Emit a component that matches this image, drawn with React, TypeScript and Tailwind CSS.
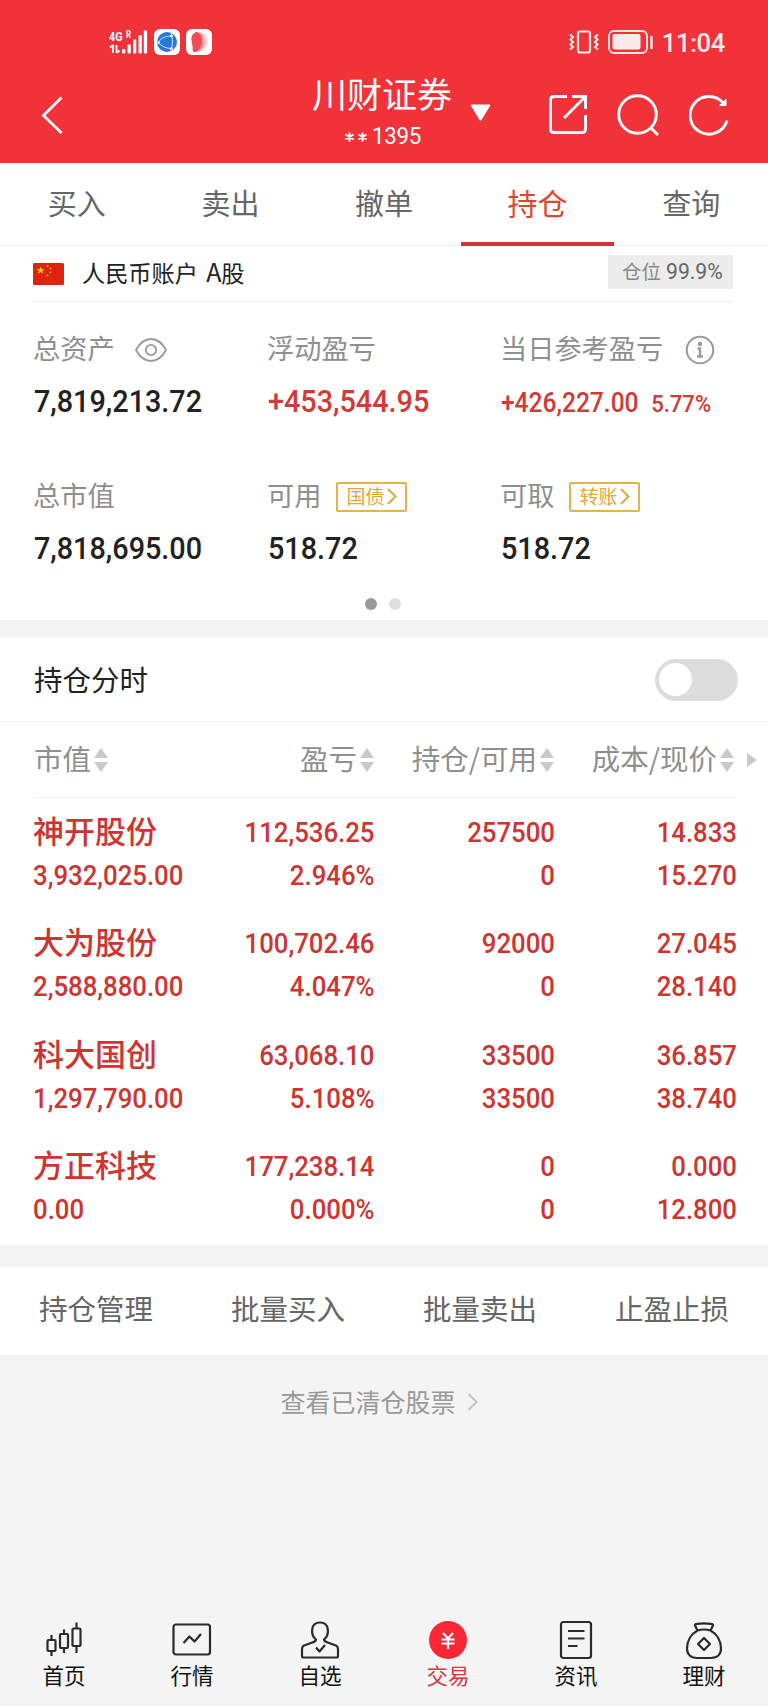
import type { ReactNode } from "react"

const tabs = ["买入", "卖出", "撤单", "持仓", "查询"]

const holdings = [
  { name: "神开股份", value: "3,932,025.00", profit: "112,536.25", rate: "2.946%", qty: "257500", usable: "0", cost: "14.833", price: "15.270" },
  { name: "大为股份", value: "2,588,880.00", profit: "100,702.46", rate: "4.047%", qty: "92000", usable: "0", cost: "27.045", price: "28.140" },
  { name: "科大国创", value: "1,297,790.00", profit: "63,068.10", rate: "5.108%", qty: "33500", usable: "33500", cost: "36.857", price: "38.740" },
  { name: "方正科技", value: "0.00", profit: "177,238.14", rate: "0.000%", qty: "0", usable: "0", cost: "0.000", price: "12.800" },
]

const actions = ["持仓管理", "批量买入", "批量卖出", "止盈止损"]

function StatusBar() {
  return (
    <div className="flex h-[84px] items-center pl-[109px] pr-[43px]">
      <svg width="40" height="26" viewBox="0 0 40 26" fill="#fff" className="mt-[-1px]">
        <text x="0" y="11.500" fontFamily="Roboto" fontWeight="700" fontSize="13" textLength="13.500" lengthAdjust="spacingAndGlyphs">4G</text>
        <text x="17" y="9" fontFamily="Roboto" fontWeight="700" fontSize="10" textLength="5" lengthAdjust="spacingAndGlyphs">R</text>
        <path d="M4 16v8M1 18.500 4 16M7.500 16v8M10.500 21.500 7.500 24" stroke="#fff" strokeWidth="1.800" fill="none" />
        <rect x="13" y="20" width="3.300" height="4.500" rx="1" />
        <rect x="18.500" y="15.500" width="3.300" height="9" rx="1" />
        <rect x="24" y="10.500" width="3.300" height="14" rx="1" />
        <rect x="29.500" y="6" width="3.300" height="18.500" rx="1" />
        <rect x="34.800" y="1.500" width="3.300" height="23" rx="1" />
      </svg>
      <svg width="26" height="26" viewBox="0 0 26 26" className="ml-[5px]">
        <rect width="26" height="26" rx="6" fill="#fff" />
        <circle cx="13" cy="13" r="10" fill="#2878dc" />
        <path d="M4 13.500C8 8 13 6.500 19 7.500M4 13.500c4 4 8 6 14 6M17 4c2 6 2 12-.5 18" stroke="#cfe4fb" strokeWidth="1" fill="none" />
        <circle cx="4.500" cy="13.500" r="1.300" fill="#fff" />
        <circle cx="17.500" cy="7" r="1.300" fill="#fff" />
        <circle cx="17.500" cy="19.500" r="1.300" fill="#fff" />
      </svg>
      <svg width="26" height="26" viewBox="0 0 26 26" className="ml-[6px]">
        <rect width="26" height="26" rx="6" fill="#fff" />
        <path d="M13 4c5-1 8 2 8.500 8s-3 10-10 11z" fill="#fbd3d3" />
        <path d="M11 3.500c5-1 7 3 7.500 8.500s-3 10-9 11z" fill="#f59a9c" />
        <path d="M6 6.500 9.500 3c4.500 0 6.500 4 6.500 9.500S13 22 8 23.500L6.500 21C7.500 16 4 11 6 6.500z" fill="#ef4d53" />
      </svg>
      <div className="ml-auto flex items-center text-[#fdeaea]">
        <svg width="30" height="24" viewBox="0 0 30 24" fill="none" stroke="currentColor" strokeWidth="2.200">
          <rect x="9" y="1.500" width="12" height="21" rx="2" />
          <path d="M1 4.500 4 7 1.500 9.500 4 12l-2.500 2.500L4 17l-3 2.500M29 4.500 26 7l2.500 2.500L26 12l2.500 2.500L26 17l3 2.500" strokeWidth="2" />
        </svg>
        <svg width="46" height="24" viewBox="0 0 46 24" fill="none" stroke="currentColor" className="ml-[9px]">
          <rect x="1" y="1" width="38" height="22" rx="5" strokeWidth="1.800" />
          <rect x="4.500" y="4" width="28" height="15.500" rx="2" fill="currentColor" stroke="none" />
          <path d="M43.500 7v11" strokeWidth="2.500" strokeLinecap="round" />
        </svg>
        <span className="ml-[8px] mt-[2px] font-[Roboto] text-[25.500px] font-medium leading-[26px] tracking-[-0.300px]">11:04</span>
      </div>
    </div>
  )
}

function Header() {
  return (
    <header className="h-[163px] bg-[#f13239] text-white">
      <StatusBar />
      <div className="mt-[-5px] grid h-[64px] grid-cols-[252px_264px_252px]">
        <div className="flex items-center pl-[41px]">
          <svg width="22" height="38" viewBox="0 0 22 38" fill="none" stroke="#fff" strokeWidth="2.800">
            <path d="M20.500 1.500 2.500 19.500l18 17.500" />
          </svg>
        </div>
        <div className="flex items-center">
          <div className="ml-[60px] mt-[-7px] w-[140px] text-center">
            <div className="text-[35px] leading-[42px]">川财证券</div>
            <div className="mt-[8px] flex h-[28px] items-center justify-center">
              <svg width="24" height="10" viewBox="0 0 24 10" stroke="#fff" strokeWidth="2" className="mt-[1px]">
                <path d="M4.500.500v9M.500 2.500l8 5M.500 7.500l8-5M17.500.500v9M13.500 2.500l8 5M13.500 7.500l8-5" />
              </svg>
              <span className="ml-[3px] w-[48px] origin-left scale-x-[0.93] font-[Roboto] text-[24px] leading-[28px] tracking-[-0.300px]">1395</span>
            </div>
          </div>
          <svg width="21" height="17" viewBox="0 0 21 17" fill="#fff" className="ml-[18px] mt-[-4px]">
            <path d="M1.500.500h18q1.500 0 .500 1.500l-8.500 14q-1 1-2 0L1 2Q0 .500 1.500.500z" />
          </svg>
        </div>
        <div className="flex items-center gap-[30px] pl-[33px]">
          <svg width="38" height="39" viewBox="0 0 38 39" fill="none" stroke="#fff" strokeWidth="2.900">
            <path d="M18 1.500H5Q1.500 1.500 1.500 5v29q0 3.500 3.500 3.500h28q3.500 0 3.500-3.500V20M23 1.500h13.500V14M36.500 1.500 15 23" />
          </svg>
          <svg width="42" height="42" viewBox="0 0 42 42" fill="none" stroke="#fff" strokeWidth="2.900">
            <circle cx="20.500" cy="20.500" r="18.800" />
            <path d="m33 33 8 8" />
          </svg>
          <svg width="40" height="42" viewBox="0 0 40 42" fill="none" stroke="#fff" strokeWidth="2.900">
            <path d="M38 26.500A18.800 18.800 0 1 1 34.500 9.500" />
            <path d="M37 5v6.500h-6.500z" fill="#fff" strokeWidth="1" />
          </svg>
        </div>
      </div>
    </header>
  )
}

function Flag() {
  return (
    <svg width="31" height="22" viewBox="0 0 31 22">
      <rect width="31" height="22" rx="1.500" fill="#de2310" />
      <path d="m7.500 3.500 1 2.700h2.900L9.100 8l.9 2.800-2.500-1.700L5 10.800 5.900 8 3.600 6.200h2.900z" fill="#ffde00" />
      <g fill="#f0a500">
        <circle cx="14.500" cy="3" r="1" />
        <circle cx="17.500" cy="5.500" r="1" />
        <circle cx="17.500" cy="9.500" r="1" />
        <circle cx="14.500" cy="12.500" r="1" />
      </g>
    </svg>
  )
}

function SmallButton({ children }: { children: ReactNode }) {
  return (
    <span className="flex h-[30px] w-[71px] items-center justify-center gap-[3px] rounded-[2px] border-2 border-[#e9b04b] text-[19px] leading-[19px] text-[#e5a63c]">
      <span className="mt-[-3px]">{children}</span>
      <svg width="10" height="17" viewBox="0 0 10 17" fill="none" stroke="currentColor" strokeWidth="2">
        <path d="m1 1 7.500 7.500L1 16" />
      </svg>
    </span>
  )
}

function Stat({ label, extra, children }: { label: string; extra?: ReactNode; children: ReactNode }) {
  return (
    <div>
      <div className="flex h-[40px] items-center text-[27.200px] text-[#8f8f8f]">
        <span className="mt-[-5px]">{label}</span>
        {extra}
      </div>
      <div className="mt-[9px] h-[46px] origin-left scale-x-[0.9] pl-px font-[Roboto] text-[32px] font-medium leading-[44px] whitespace-nowrap">{children}</div>
    </div>
  )
}

function Summary() {
  return (
    <section className="h-[374px] bg-white">
      <div className="ml-[33px] mr-[35px] flex h-[56px] items-center border-b border-[#ececec]">
        <Flag />
        <span className="ml-[18px] mt-[-3px] text-[23.200px] text-[#222] [word-spacing:3px]">人民币账户 <span className="text-[25px]">A</span>股</span>
        <span className="ml-auto mt-[-3px] flex h-[34px] w-[125px] items-center justify-center bg-[#ececec] text-[19.500px] text-[#888]">
          <span className="mt-[-2px] ml-[8px]">仓位</span>
          <span className="ml-[5px] w-[61px] origin-left scale-x-[0.94] font-[Roboto] text-[22.500px] text-[#666]">99.9%</span>
        </span>
      </div>
      <div className="grid grid-cols-[234px_233px_1fr] gap-y-[52px] pl-[33px] pt-[28px] text-[#222]">
        <Stat
          label="总资产"
          extra={
            <svg width="32" height="24" viewBox="0 0 32 24" fill="none" stroke="#999" strokeWidth="1.800" className="ml-[20px]">
              <path d="M1 12C5 4.500 10 1 16 1s11 3.500 15 11c-4 7.500-9 11-15 11S5 19.500 1 12z" />
              <circle cx="16" cy="12" r="5.200" />
            </svg>
          }
        >
          7,819,213.72
        </Stat>
        <Stat label="浮动盈亏">
          <span className="text-[#d23a36]">+453,544.95</span>
        </Stat>
        <Stat
          label="当日参考盈亏"
          extra={
            <svg width="30" height="30" viewBox="0 0 30 30" fill="none" stroke="#999" strokeWidth="2" className="ml-[22px] mt-[-1px]">
              <circle cx="15" cy="15" r="13.300" />
              <circle cx="15" cy="9" r="2.200" fill="#999" stroke="none" />
              <path d="M12.500 13.500H15V21M12 21.500h6" strokeWidth="2.400" />
            </svg>
          }
        >
          <span className="text-[27.300px] text-[#d23a36]">+426,227.00</span>
          <span className="ml-[14px] text-[24.500px] text-[#d23a36]">5.77%</span>
        </Stat>
        <Stat label="总市值">7,818,695.00</Stat>
        <Stat label="可用" extra={<span className="ml-[15px] mt-[-1px]"><SmallButton>国债</SmallButton></span>}>518.72</Stat>
        <Stat label="可取" extra={<span className="ml-[15px] mt-[-1px]"><SmallButton>转账</SmallButton></span>}>518.72</Stat>
      </div>
      <div className="flex justify-center gap-[12px] pt-[26px] pr-[2px]">
        <span className="h-3 w-3 rounded-full bg-[#999]" />
        <span className="h-3 w-3 rounded-full bg-[#dedede]" />
      </div>
    </section>
  )
}

function SortHead({ label }: { label: string }) {
  return (
    <div className="flex items-center whitespace-nowrap">
      <span className="mt-[-2px]">{label}</span>
      <svg width="14" height="24" viewBox="0 0 14 24" fill="#c9c9c9" className="ml-[3px]">
        <path d="M7 0l7 10H0zM7 24l7-10H0z" />
      </svg>
    </div>
  )
}

function Cell({ top, bottom, left }: { top: string; bottom: string; left?: boolean }) {
  const num = left ? "h-[43px] origin-left scale-x-[0.91] font-[Roboto] leading-[43px]" : "h-[43px] origin-right scale-x-[0.91] font-[Roboto] leading-[43px]"

  return (
    <div className={left ? "text-left" : "text-right"}>
      <div className={left ? "h-[43px] whitespace-nowrap text-[31px] leading-[37px]" : num}>{top}</div>
      <div className={num}>{bottom}</div>
    </div>
  )
}

function Holdings() {
  return (
    <section className="bg-white">
      <div className="flex h-[84px] items-center border-b border-[#f0f0f0] pl-[34px] pr-[30px] text-[28.500px] text-[#222]">
        <span>持仓分时</span>
        <span className="ml-auto flex h-[42px] w-[83px] items-center rounded-full bg-[#dcdcdc] pl-[4px]">
          <span className="h-[33px] w-[33px] rounded-full bg-white" />
        </span>
      </div>
      <div className="grid h-[75px] grid-cols-[156px_184px_180px_180px_34px] items-center pl-[34px] text-[28.500px] text-[#8f8f8f]">
        <SortHead label="市值" />
        <div className="flex justify-end"><SortHead label="盈亏" /></div>
        <div className="flex justify-end"><SortHead label="持仓/可用" /></div>
        <div className="flex justify-end"><SortHead label="成本/现价" /></div>
        <svg width="10" height="14" viewBox="0 0 10 14" fill="#c9c9c9" className="ml-[13px]">
          <path d="M0 0l10 7-10 7z" />
        </svg>
      </div>
      <div className="ml-[34px] mr-[33px] h-px bg-[#ececec]" />
      <div className="h-[447px] pl-[33px] pt-[13px] text-[28.300px] font-medium text-[#cf3430]">
        {holdings.map((h) => (
          <div key={h.name} className="grid h-[111.300px] grid-cols-[156px_185.500px_180px_182px]">
            <Cell left top={h.name} bottom={h.value} />
            <Cell top={h.profit} bottom={h.rate} />
            <Cell top={h.qty} bottom={h.usable} />
            <Cell top={h.cost} bottom={h.price} />
          </div>
        ))}
      </div>
    </section>
  )
}

const navItems: { label: string; active?: boolean; icon: ReactNode }[] = [
  {
    label: "首页",
    icon: (
      <>
        <rect x="3.500" y="20" width="8" height="11" rx="1" />
        <rect x="16" y="14" width="8" height="14" rx="1" />
        <rect x="28.500" y="8.500" width="8" height="17.500" rx="1" />
        <path d="M7.500 15v5M7.500 31v5M20 9.500V14M20 28v5M32.500 2.500v6M32.500 26v7" />
      </>
    ),
  },
  {
    label: "行情",
    icon: (
      <>
        <rect x="1.500" y="4.500" width="36.500" height="30" rx="2.500" />
        <path d="m11.500 23 6-6.500 5 5 6.500-7.500" />
      </>
    ),
  },
  {
    label: "自选",
    icon: (
      <>
        <path d="M16 19.500C10.500 15 10 2.500 20 2.500s9.500 12.500 4 17c0 2 2 2.500 5 3.500l7 2.500q2 1 2 3.500v7q0 1.500-1.500 1.500h-33Q2 37.500 2 36v-7q0-2.500 2-3.500l7-2.500c3-1 5-1.500 5-3.500z" />
        <path d="m16 27.500 3.500 4 5.500-6.500" />
      </>
    ),
  },
  {
    label: "交易",
    active: true,
    icon: (
      <>
        <circle cx="20" cy="20" r="19" fill="#fb2736" stroke="none" />
        <path d="m15 13 5 5.500 5-5.500M20 18.500V29M13.500 19.500h13M13.500 23.500h13" stroke="#fff" strokeWidth="2.200" />
      </>
    ),
  },
  {
    label: "资讯",
    icon: (
      <>
        <rect x="5" y="2" width="30" height="36" rx="2.500" />
        <path d="M12 11h16.500M12 18.500h16.500M12 26h9.500" />
      </>
    ),
  },
  {
    label: "理财",
    icon: (
      <>
        <path d="M13.500 10.500 11 5.500q0-1.500 2-1.700 7-1 14 0 2 .200 2 1.700l-2.500 5" />
        <path d="M13.500 10.500q6.500-2 13 0C33 14 37 21 37 28.500c0 6-4 9.500-10 9.500H13c-6 0-10-3.500-10-9.500C3 21 7 14 13.500 10.500z" />
        <path d="m20 18 6 6-6 6-6-6z" />
      </>
    ),
  },
]

export default function App() {
  return (
    <div className="flex h-[1707px] w-[768px] flex-col overflow-hidden bg-[#f4f4f4] font-['Noto_Sans_CJK_SC',sans-serif]">
      <Header />

      {/* Tabs */}
      <nav className="grid h-[83px] grid-cols-5 border-b border-[#f3ecec] bg-white text-[29px] text-[#666]">
        {tabs.map((tab) => (
          <div
            key={tab}
            className={tab === "持仓" ? "mb-[-1px] flex items-center justify-center border-b-4 border-[#cf3438] text-[30px] text-[#e0452f]" : "flex items-center justify-center pb-[2px]"}
          >
            {tab}
          </div>
        ))}
      </nav>

      <Summary />
      <div className="h-[18px]" />
      <Holdings />

      {/* Batch actions */}
      <div className="mt-[22px] grid h-[88px] grid-cols-4 items-center bg-white pb-[5px] text-center text-[28.500px] text-[#666]">
        {actions.map((action) => (
          <span key={action}>{action}</span>
        ))}
      </div>

      <div className="flex h-[94px] items-center justify-center gap-[11px] pr-[10px] text-[25px] text-[#999]">
        <span>查看已清仓股票</span>
        <svg width="11" height="18" viewBox="0 0 11 18" fill="none" stroke="#c4c4c4" strokeWidth="2">
          <path d="m1.500 1 8 8-8 8" />
        </svg>
      </div>

      {/* Bottom navigation */}
      <nav className="mt-auto grid h-[87px] grid-cols-6 border-b border-white">
        {navItems.map((item) => (
          <div key={item.label} className={item.active ? "flex flex-col items-center text-[#dc3340]" : "flex flex-col items-center text-[#111]"}>
            <svg width="40" height="40" viewBox="0 0 40 40" fill="none" stroke="#2a2a2a" strokeWidth="2.200" strokeLinejoin="round">
              {item.icon}
            </svg>
            <span className="text-[21.500px] leading-[30px]">{item.label}</span>
          </div>
        ))}
      </nav>
    </div>
  )
}
